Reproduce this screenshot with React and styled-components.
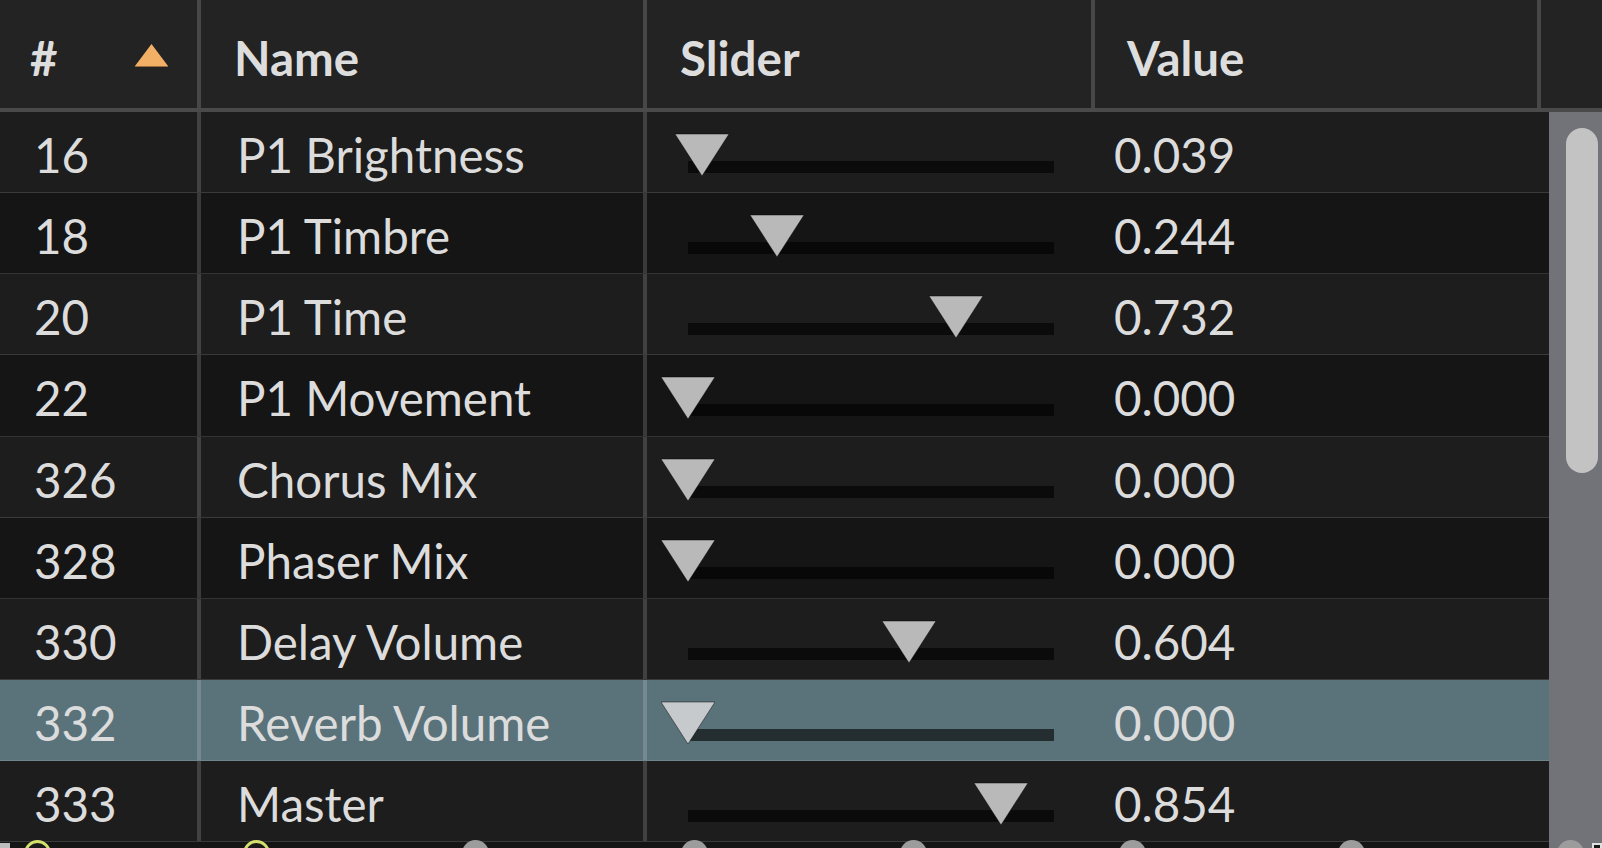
import React from 'react';
import styled, { createGlobalStyle } from 'styled-components';

const GlobalStyle = createGlobalStyle`
	*, *::before, *::after {
		box-sizing: border-box;
	}
	html, body {
		margin: 0;
		padding: 0;
		background: #151515;
	}
	body {
		font-family: Lato, "Noto Sans", sans-serif;
		overflow: hidden;
	}
`;

const params = [
	{ id: 16, name: 'P1 Brightness', value: 0.039 },
	{ id: 18, name: 'P1 Timbre', value: 0.244 },
	{ id: 20, name: 'P1 Time', value: 0.732 },
	{ id: 22, name: 'P1 Movement', value: 0 },
	{ id: 326, name: 'Chorus Mix', value: 0 },
	{ id: 328, name: 'Phaser Mix', value: 0 },
	{ id: 330, name: 'Delay Volume', value: 0.604 },
	{ id: 332, name: 'Reverb Volume', value: 0, selected: true },
	{ id: 333, name: 'Master', value: 0.854 },
];

const knobs = ['on', 'on', 'off', 'off', 'off', 'off', 'off', 'off'];

const TRACK_WIDTH = 366;

const Page = styled.div`
	position: relative;
	width: 1602px;
	height: 848px;
	overflow: hidden;
	background: #151515;
	color: #dcdcdc;
`;

const HeaderRow = styled.div`
	display: grid;
	grid-template-columns: 201px 446px 448px 446px 1fr;
	height: 112px;
	background: #232323;
	border-bottom: 4px solid #4a4a4a;
`;

const HeadCell = styled.div`
	display: flex;
	align-items: center;
	justify-content: space-between;
	padding: 6px ${(p) => (p.$right ? p.$right : 0)}px 0 ${(p) => p.$pad}px;
	border-right: ${(p) => (p.$last ? 'none' : '4px solid #474747')};
	font-size: 47.5px;
	font-weight: 700;
	color: #dddddd;
	cursor: default;
`;

const SortArrow = styled.svg`
	width: 33px;
	height: 23px;
	margin-top: -4px;
`;

const Body = styled.div`
	display: flex;
	height: 736px;
`;

const Rows = styled.div`
	flex: 1;
	display: flex;
	flex-direction: column;
	background: #151515;
`;

const Row = styled.div`
	flex: none;
	display: grid;
	grid-template-columns: 201px 446px 447px 1fr;
	height: 81.125px;
	background: ${(p) => (p.$selected ? '#5a737b' : p.$odd ? '#1d1d1d' : '#151515')};
	border-bottom: 1px solid rgba(255, 255, 255, 0.13);
`;

const Cell = styled.div`
	display: flex;
	align-items: center;
	padding: 5px 0 0 ${(p) => p.$pad}px;
	border-right: ${(p) => (p.$divider ? '4px solid rgba(255, 255, 255, 0.16)' : 'none')};
	font-size: 47.5px;
	color: #dcdcdc;
	white-space: nowrap;
`;

const SliderCell = styled.div`
	display: flex;
	align-items: flex-start;
	padding-left: 41px;
`;

const Track = styled.div`
	position: relative;
	width: ${TRACK_WIDTH}px;
	height: 12px;
	margin-top: 49px;
	background: rgba(0, 0, 0, 0.6);
`;

const Thumb = styled.svg`
	position: absolute;
	top: -28px;
	width: 56px;
	height: 44px;
`;

const ScrollTrack = styled.div`
	width: 53px;
	padding: 16px 4px 0 17px;
	background: #727378;
`;

const ScrollThumb = styled.div`
	width: 32px;
	height: 345px;
	border-radius: 16px;
	background: #c3c3c3;
`;

const KnobStrip = styled.div`
	position: absolute;
	left: 0;
	right: 0;
	top: 840px;
	display: flex;
	gap: 192px;
	padding-left: 24px;
`;

const Knob = styled.div`
	flex: none;
	width: 27px;
	height: 27px;
	border-radius: 50%;
	background: ${(p) => (p.$on ? '#1a1a1a' : '#9c9c9c')};
	border: ${(p) => (p.$on ? '3px solid #d4e06c' : 'none')};
`;

const Corner = styled.div`
	position: absolute;
	top: 3px;
	width: 10px;
	height: 10px;
	left: ${(p) => (p.$right ? 'auto' : '0')};
	right: ${(p) => (p.$right ? '0' : 'auto')};
	background: ${(p) => (p.$right ? '#151515' : '#bdbdbd')};
	border: ${(p) => (p.$right ? '2px solid #e0e0e0' : 'none')};
`;

const Slider = ({ value, selected }) => (
	<SliderCell>
		<Track>
			<Thumb
				viewBox="0 0 56 44"
				style={{ left: value * TRACK_WIDTH - 28 }}
			>
				<polygon
					points="1,1 55,1 28,43"
					fill={selected ? '#c6cacc' : '#b9b9b9'}
					stroke="rgba(0,0,0,0.45)"
					strokeWidth="1"
				/>
			</Thumb>
		</Track>
	</SliderCell>
);

const App = () => (
	<Page>
		<GlobalStyle />
		<HeaderRow>
			<HeadCell $pad={30} $right={29}>
				#
				<SortArrow viewBox="0 0 33 23">
					<polygon points="16.5,0 33,22 0,22" fill="#f2b066" />
					<line x1="0" y1="22.5" x2="33" y2="22.5" stroke="#9a6a3a" strokeWidth="1" />
				</SortArrow>
			</HeadCell>
			<HeadCell $pad={33}>Name</HeadCell>
			<HeadCell $pad={33}>Slider</HeadCell>
			<HeadCell $pad={32}>Value</HeadCell>
			<HeadCell $pad={0} $last />
		</HeaderRow>
		<Body>
			<Rows>
				{params.map((p, i) => (
					<Row key={p.id} $odd={i % 2 === 0} $selected={p.selected}>
						<Cell $pad={34} $divider>{p.id}</Cell>
						<Cell $pad={36} $divider>{p.name}</Cell>
						<Slider value={p.value} selected={p.selected} />
						<Cell $pad={20}>{p.value.toFixed(3)}</Cell>
					</Row>
				))}
			</Rows>
			<ScrollTrack>
				<ScrollThumb />
			</ScrollTrack>
		</Body>
		<KnobStrip>
			<Corner />
			{knobs.map((k, i) => (
				<Knob key={i} $on={k === 'on'} />
			))}
			<Corner $right />
		</KnobStrip>
	</Page>
);

export default App;
